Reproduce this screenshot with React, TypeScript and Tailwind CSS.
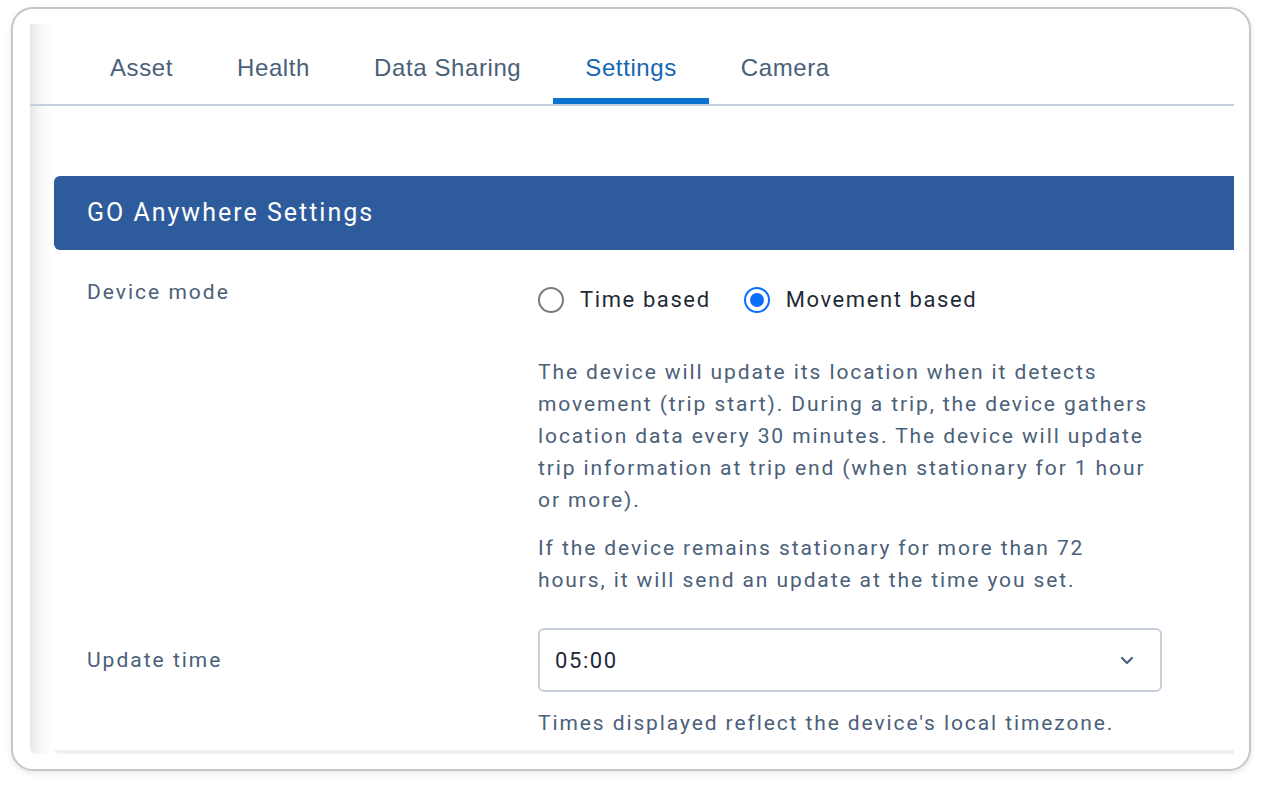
import React from "react";

const tabs = ["Asset", "Health", "Data Sharing", "Settings", "Camera"];

function Radio({ checked, label }: { checked: boolean; label: string }) {
  return (
    <label className="flex items-center gap-4">
      <span
        className={
          checked
            ? "flex h-[26px] w-[26px] items-center justify-center rounded-full border-2 border-[#0d6efd] bg-white"
            : "flex h-[26px] w-[26px] items-center justify-center rounded-full border-2 border-[#7a7a7a] bg-white"
        }
      >
        {checked && <span className="h-[14px] w-[14px] rounded-full bg-[#0d6efd]" />}
      </span>
      <span className="text-[22px] leading-[32px] tracking-[1.6px] text-[#1f2a37]">{label}</span>
    </label>
  );
}

export default function App() {
  return (
    <div className="min-h-screen w-full bg-white pl-[11px] pt-[7px]" style={{ fontFamily: "Roboto, 'Noto Sans', sans-serif" }}>
      <div className="h-[764px] w-[1240px] rounded-[22px] border-2 border-[#c6c6c6] bg-white pb-[15px] pl-[17px] pr-[15px] pt-[15px] shadow-[0_2px_6px_rgba(0,0,0,0.10)]">
        <div className="flex h-full flex-col overflow-hidden rounded-bl-md bg-[linear-gradient(90deg,#e8e8e8_0px,#f5f5f5_8px,#ffffff_22px)]">
          {/* Tabs */}
          <div className="flex border-b-2 border-[#c5d0dc] pl-[48px]">
            {tabs.map((t) => (
              <div
                key={t}
                className={
                  t === "Settings"
                    ? "border-b-[6px] border-[#0b74d1] px-8 pb-[16px] pt-[30px] text-[24px] leading-[28px] tracking-[0.6px] text-[#1565b5]"
                    : "border-b-[6px] border-transparent px-8 pb-[16px] pt-[30px] text-[24px] leading-[28px] tracking-[0.6px] text-[#4a6079]"
                }
                style={{ fontFamily: "'Liberation Sans', Arial, sans-serif" }}
              >
                {t}
              </div>
            ))}
          </div>

          {/* Section */}
          <div className="ml-[24px] mt-[70px] flex flex-1 flex-col rounded-bl-md border-b-4 border-[#f0f2f5]">
            <div className="flex h-[74px] items-center rounded-l-md bg-[#2e5b9b] pl-[33px] text-[25px] tracking-[2px] text-white">
              GO Anywhere Settings
            </div>

            <div className="mt-[26px] flex pl-[33px]">
              <div className="w-[451px] text-[21px] leading-[32px] tracking-[2px] text-[#4a6079]">Device mode</div>
              <div className="w-[624px]">
                <div className="flex h-[48px] items-center gap-[33px]">
                  <Radio checked={false} label="Time based" />
                  <Radio checked={true} label="Movement based" />
                </div>
                <p className="mt-[32px] w-[615px] text-[21px] leading-[32px] tracking-[1.9px] text-[#4a6079]">
                  The device will update its location when it detects movement (trip start). During a trip, the device gathers location data every 30 minutes. The device will update trip information at trip end (when stationary for 1 hour or more).
                </p>
                <p className="mt-[16px] w-[615px] text-[21px] leading-[32px] tracking-[1.9px] text-[#4a6079]">
                  If the device remains stationary for more than 72 hours, it will send an update at the time you set.
                </p>
              </div>
            </div>

            <div className="mt-[32px] flex pl-[33px]">
              <div className="flex h-[64px] w-[451px] items-center text-[21px] leading-[32px] tracking-[2px] text-[#4a6079]">Update time</div>
              <div className="w-[624px]">
                <div className="flex h-[64px] items-center justify-between rounded-[6px] border-2 border-[#c5d0dc] pl-[15px] pr-[26px]">
                  <span className="text-[22px] tracking-[1.6px] text-[#1f2a37]">05:00</span>
                  <svg width="14" height="9" viewBox="0 0 14 9" fill="none">
                    <path d="M2 2l5 5 5-5" stroke="#4a6079" strokeWidth="2.2" strokeLinecap="round" strokeLinejoin="round" />
                  </svg>
                </div>
                <p className="mt-[15px] text-[21px] leading-[32px] tracking-[1.9px] text-[#4a6079]">
                  Times displayed reflect the device's local timezone.
                </p>
              </div>
            </div>
          </div>
        </div>
      </div>
    </div>
  );
}
